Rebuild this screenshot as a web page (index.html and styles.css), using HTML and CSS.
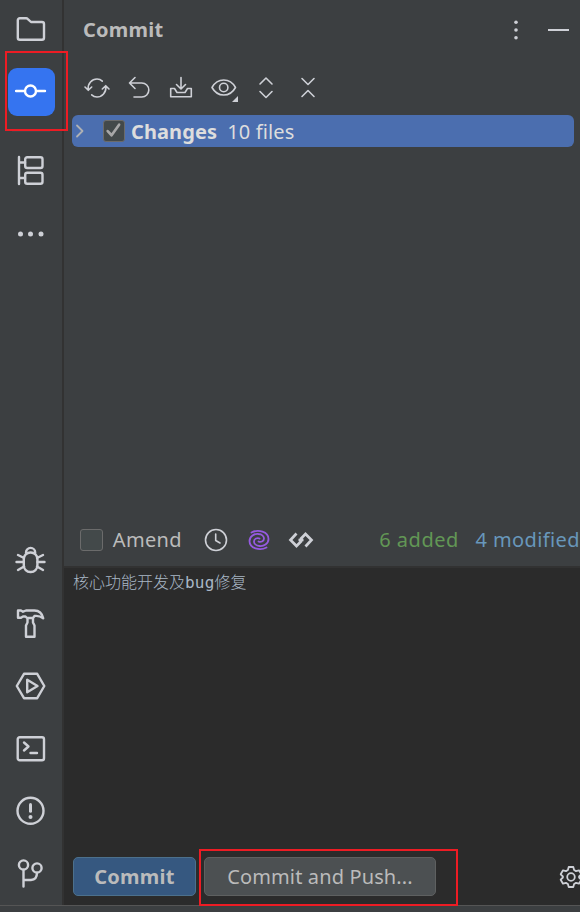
FILE: index.html
```
<!DOCTYPE html>
<html lang="en">
<head>
  <meta charset="UTF-8">
  <meta name="viewport" content="width=device-width, initial-scale=1.0">
  <title>Commit</title>
  <link rel="stylesheet" href="styles.css">
</head>
<body>
  <div class="window">
    <div class="workspace">
      <nav class="sidebar">
        <button class="tool-btn" aria-label="Project">
          <svg class="icon" viewBox="0 0 32 32"><path d="M2.800 7.200a2 2 0 0 1 2-2h6.400a2 2 0 0 1 1.400.600L16 9h11a2 2 0 0 1 2 2v13.800a2 2 0 0 1-2 2H4.800a2 2 0 0 1-2-2z"/></svg>
        </button>
        <button class="tool-btn active" aria-label="Commit">
          <svg class="icon" viewBox="0 0 32 32"><circle cx="15.500" cy="15" r="5.500"/><path d="M1 15h9M21 15h9"/></svg>
        </button>
        <div class="separator"></div>
        <button class="tool-btn" aria-label="Structure">
          <svg class="icon" viewBox="0 0 32 32"><path d="M4 2v27M4 7.500h6M4 23h6"/><rect x="10.200" y="2.200" width="17.300" height="10.800" rx="2"/><rect x="10.200" y="17.700" width="17.300" height="11" rx="2"/></svg>
        </button>
        <button class="tool-btn" aria-label="More">
          <svg class="icon dots" viewBox="0 0 32 32"><circle cx="5.500" cy="16" r="2.500"/><circle cx="15.500" cy="16" r="2.500"/><circle cx="26" cy="16" r="2.500"/></svg>
        </button>
        <div class="spacer"></div>
        <button class="tool-btn" aria-label="Debug">
          <svg class="icon" viewBox="0 0 32 32"><rect x="8.800" y="7.500" width="13.600" height="19.500" rx="6.500"/><path d="M11 7.500a4.600 4.600 0 0 1 9.200 0M3 10l6 3M1.500 17h7M3 25l6-3.500M28 10l-6 3M29.500 17h-7M28 25l-6-3.500"/></svg>
        </button>
        <button class="tool-btn" aria-label="Build">
          <svg class="icon" viewBox="0 0 32 32"><path d="M3 2.500h3l2 1.200 3-1.200h8.500c4.500 0 7.500 2.500 8.700 7.800-3-2.300-5-2.700-8.700-2.300L18 10h-6l-1.500-1.500H8L6 9.700H3zM12.500 10v4.500l-1.500 3v11.300h8.500V17.500l-1.500-3V10"/></svg>
        </button>
        <button class="tool-btn" aria-label="Services">
          <svg class="icon" viewBox="0 0 32 32"><path d="M9 3.800h13.200L29.300 16l-7.100 12.200H9L1.800 16zM12.200 9.800v12.400L22.500 16z"/></svg>
        </button>
        <button class="tool-btn" aria-label="Terminal">
          <svg class="icon" viewBox="0 0 32 32"><rect x="2.700" y="4.200" width="26.300" height="23" rx="2"/><path d="M9 9.500l4.500 4L9 17.500M15.500 20h6.500"/></svg>
        </button>
        <button class="tool-btn" aria-label="Problems">
          <svg class="icon" viewBox="0 0 32 32"><circle cx="15.500" cy="15.800" r="13"/><path class="thick" d="M15.500 9.500v6.800"/><circle class="dot" cx="15.500" cy="22" r="2"/></svg>
        </button>
        <button class="tool-btn" aria-label="Git">
          <svg class="icon" viewBox="0 0 32 32"><circle cx="8.500" cy="7" r="4.600"/><circle cx="22" cy="10" r="4.600"/><path d="M8.500 11.600v17M8.500 22H16q6 0 6-7.400"/></svg>
        </button>
      </nav>

      <main class="panel">
        <header class="panel-header">
          <h1>Commit</h1>
          <svg class="kebab" viewBox="0 0 6 20"><circle cx="3" cy="2.200" r="1.800"/><circle cx="3" cy="10" r="1.800"/><circle cx="3" cy="17.800" r="1.800"/></svg>
          <span class="minimize"></span>
        </header>

        <div class="toolbar">
          <svg class="small-icon" viewBox="0 0 28 28"><path d="M5.200 15.500C4.500 9.500 9 5 14 5c2.400 0 4 .8 5.300 2.100M22.800 12.500C23.500 18.500 19 23 14 23c-2.400 0-4-.8-5.300-2.100M2 13l3.300 3.300L8.700 13M19.300 15l3.400-3.300L26 15"/></svg>
          <svg class="small-icon" viewBox="0 0 28 28"><path d="M10 3.500L4.500 9l5.500 5.500M4.500 9h12.300a7 7 0 0 1 0 14H9"/></svg>
          <svg class="small-icon" viewBox="0 0 28 28"><path d="M14 3.500v11M9.500 10.500L14 15l4.500-4.500M7.500 14.500H3.700v8.300h20.600v-8.300h-3.800M7.500 14.500l2.500 4h8l2.500-4"/></svg>
          <svg class="small-icon" viewBox="0 0 28 28"><path d="M2 13.500C7.500 3.500 20 3.500 25.500 13.500 20 23.500 7.500 23.500 2 13.500z"/><circle cx="13.700" cy="13.500" r="4.200"/><path class="corner" d="M28 22v6h-6z"/></svg>
          <svg class="small-icon" viewBox="0 0 28 28"><path d="M8 10l6-6 6 6M8 17.500l6 6 6-6"/></svg>
          <svg class="small-icon" viewBox="0 0 28 28"><path d="M8 4.500l6 6 6-6M8 22.500l6-6 6 6"/></svg>
        </div>

        <div class="changes">
          <svg class="chevron" viewBox="0 0 10 14"><path d="M2 1.500L7.500 7 2 12.500"/></svg>
          <span class="checkbox checked">
            <svg viewBox="0 0 18 18"><path d="M3.500 9.500l3.700 4L14.300 3.500"/></svg>
          </span>
          <strong>Changes</strong>
          <span class="file-count">10 files</span>
        </div>

        <div class="tree"></div>

        <div class="options">
          <span class="checkbox"></span>
          <span class="amend">Amend</span>
          <svg class="small-icon" viewBox="0 0 28 28"><circle cx="14" cy="14" r="10.500"/><path d="M13.700 8v6.500l4.300 2.500"/></svg>
          <svg class="small-icon swirl" viewBox="0 0 28 28"><path d="M6.500 6.500C13 3 23.500 5.500 23.500 13c0 5-5 7.500-9 7C11 19.800 9 17.500 9 15.500c0-3 3.500-4 5.500-3M21.500 21.500C15 25 4.500 22.500 4.500 15c0-5 5-7.500 9-7C17 8.200 19 10.500 19 12.500c0 3-3.500 4-5.500 3"/></svg>
          <svg class="small-icon code" viewBox="0 0 28 28"><path d="M9.500 7.500L3.500 14l6 6 4.500-4.500v-3L18.500 8l6 6-6 6.500M11.500 14h5"/></svg>
          <span class="added">6 added</span>
          <span class="modified">4 modified</span>
        </div>

        <section class="editor">
          <p class="message">核心功能开发及<span class="latin">bug</span>修复</p>
          <div class="actions">
            <button class="btn primary">Commit</button>
            <button class="btn">Commit and Push...</button>
            <svg class="gear" viewBox="0 0 24 24"><path d="M9.700 2h4.600l.8 3 1.900 1.100 3-.8 2.300 4-2.200 2.200v1l2.200 2.200-2.300 4-3-.8-1.900 1.100-.8 3H9.700l-.8-3L7 17.900l-3 .8-2.300-4 2.200-2.200v-1L1.700 9.300l2.300-4 3 .8L8.900 5z"/><circle cx="12" cy="12" r="3.800"/></svg>
          </div>
        </section>
      </main>
    </div>
    <footer class="status"></footer>

    <div class="highlight highlight-tab"></div>
    <div class="highlight highlight-push"></div>
  </div>
</body>
</html>
```
FILE: styles.css
```
* {
  margin: 0;
  padding: 0;
  box-sizing: border-box;
}

body {
  font-family: "Noto Sans", "Open Sans", sans-serif;
  font-size: 20px;
  color: #bbbbbb;
  background-color: #3c3f41;
}

button {
  font: inherit;
  color: inherit;
  border: none;
  background: none;
}

svg {
  display: block;
  flex-shrink: 0;
  fill: none;
  stroke: #ced0d6;
  stroke-linecap: round;
  stroke-linejoin: round;
}

.window {
  position: relative;
  display: flex;
  flex-direction: column;
  width: 580px;
  height: 912px;
  overflow: hidden;
}

.workspace {
  display: flex;
  flex: 1;
  min-height: 0;
}

/* left tool stripe */
.sidebar {
  display: flex;
  flex-direction: column;
  width: 64px;
  padding: 5px 0 8px 8px;
  gap: 15.5px;
  border-right: 2px solid #323232;
}

.tool-btn {
  display: flex;
  align-items: center;
  justify-content: center;
  width: 47px;
  height: 47px;
  padding-right: 2px;
  flex-shrink: 0;
  border-radius: 9px;
}

.tool-btn.active {
  height: 48px;
  background-color: #3574f0;
}

.tool-btn.active .icon {
  stroke: #ffffff;
}

.icon {
  width: 32px;
  height: 32px;
  stroke-width: 2.4;
}

.icon .thick {
  stroke-width: 3;
}

.dots,
.icon .dot {
  fill: #ced0d6;
  stroke: none;
}

.separator {
  width: 38px;
  height: 1px;
  margin-left: 4px;
  background-color: #43454a;
}

.spacer {
  flex: 1;
}

/* commit panel */
.panel {
  display: flex;
  flex-direction: column;
  flex: 1;
  min-width: 0;
}

.panel-header {
  display: flex;
  align-items: center;
  height: 60px;
  padding: 0 11px 0 19px;
}

.panel-header h1 {
  flex: 1;
  padding-bottom: 2px;
  font-size: 20px;
  font-weight: 700;
  letter-spacing: 0.25px;
}

.kebab {
  width: 6px;
  height: 20px;
  margin-right: 29px;
  fill: #ced0d6;
  stroke: none;
}

.minimize {
  width: 21px;
  height: 1.5px;
  background-color: #ced0d6;
}

.toolbar {
  display: flex;
  align-items: center;
  gap: 14.4px;
  height: 55px;
  padding-left: 18.5px;
}

.small-icon {
  width: 28px;
  height: 28px;
  stroke-width: 1.6;
}

.small-icon .corner {
  fill: #ced0d6;
  stroke: none;
}

.changes {
  display: flex;
  align-items: center;
  height: 32px;
  margin: 0 6px 0 8px;
  padding-left: 3px;
  color: #dddddd;
  background-color: #4b6eaf;
  border-radius: 6px;
}

.chevron {
  width: 10px;
  height: 14px;
  margin-right: 18px;
  stroke: #afb1b3;
  stroke-width: 1.8;
}

.checkbox {
  width: 22px;
  height: 22px;
  border: 1.5px solid #6b6b6b;
  border-radius: 3px;
  background-color: #43494a;
}

.checked svg {
  width: 19px;
  height: 19px;
  stroke: #a7a7a7;
  stroke-width: 2.5;
}

.changes strong {
  margin: 0 10px 0 6px;
  letter-spacing: 0.1px;
}

.file-count {
  letter-spacing: 0.15px;
}

.tree {
  flex: 1;
}

.options {
  display: flex;
  align-items: center;
  height: 53px;
  padding: 0 0 2px 16px;
  white-space: nowrap;
  overflow: hidden;
  border-bottom: 2px solid #323232;
}

.options .checkbox {
  width: 23px;
}

.amend {
  width: 80px;
  margin: 0 10px 0 10px;
  letter-spacing: 0.3px;
}

.options .small-icon {
  margin-right: 14.5px;
}

.options .swirl {
  stroke: #955ae0;
  stroke-width: 1.8;
}

.options .code {
  stroke-width: 2.7;
  stroke-linejoin: miter;
  stroke-linecap: butt;
  margin-right: 64px;
}

.added {
  width: 97px;
  color: #629755;
  letter-spacing: 0.5px;
}

.modified {
  color: #6897bb;
  letter-spacing: 0.4px;
}

.editor {
  display: flex;
  flex-direction: column;
  justify-content: space-between;
  height: 337px;
  padding: 1px 0 9px 9px;
  background-color: #2b2b2b;
}

.message {
  font-family: "Noto Sans CJK SC", sans-serif;
  font-size: 16px;
  line-height: 24px;
  font-weight: 300;
  color: #a9b7c6;
}

.message .latin {
  font-family: "DejaVu Sans Mono", monospace;
  letter-spacing: 0.2px;
}

.actions {
  display: flex;
  align-items: center;
}

.btn {
  flex-shrink: 0;
  width: 232px;
  height: 39px;
  border: 1.5px solid #5e6060;
  border-radius: 5px;
  background-color: #4c5052;
  letter-spacing: 0.13px;
}

.btn.primary {
  width: 123px;
  margin-right: 8px;
  font-weight: 700;
  letter-spacing: 0.25px;
  border-color: #4c708c;
  background-color: #365880;
}

.gear {
  width: 24px;
  height: 24px;
  margin-left: 123px;
  stroke-width: 1.8;
}

.status {
  height: 7px;
  border-top: 1px solid #555555;
}

/* red callout frames */
.highlight {
  position: absolute;
  border: 2px solid #ed1c24;
}

.highlight-tab {
  left: 5px;
  top: 51px;
  width: 63px;
  height: 80px;
}

.highlight-push {
  left: 199px;
  top: 849px;
  width: 259px;
  height: 57px;
}
```
